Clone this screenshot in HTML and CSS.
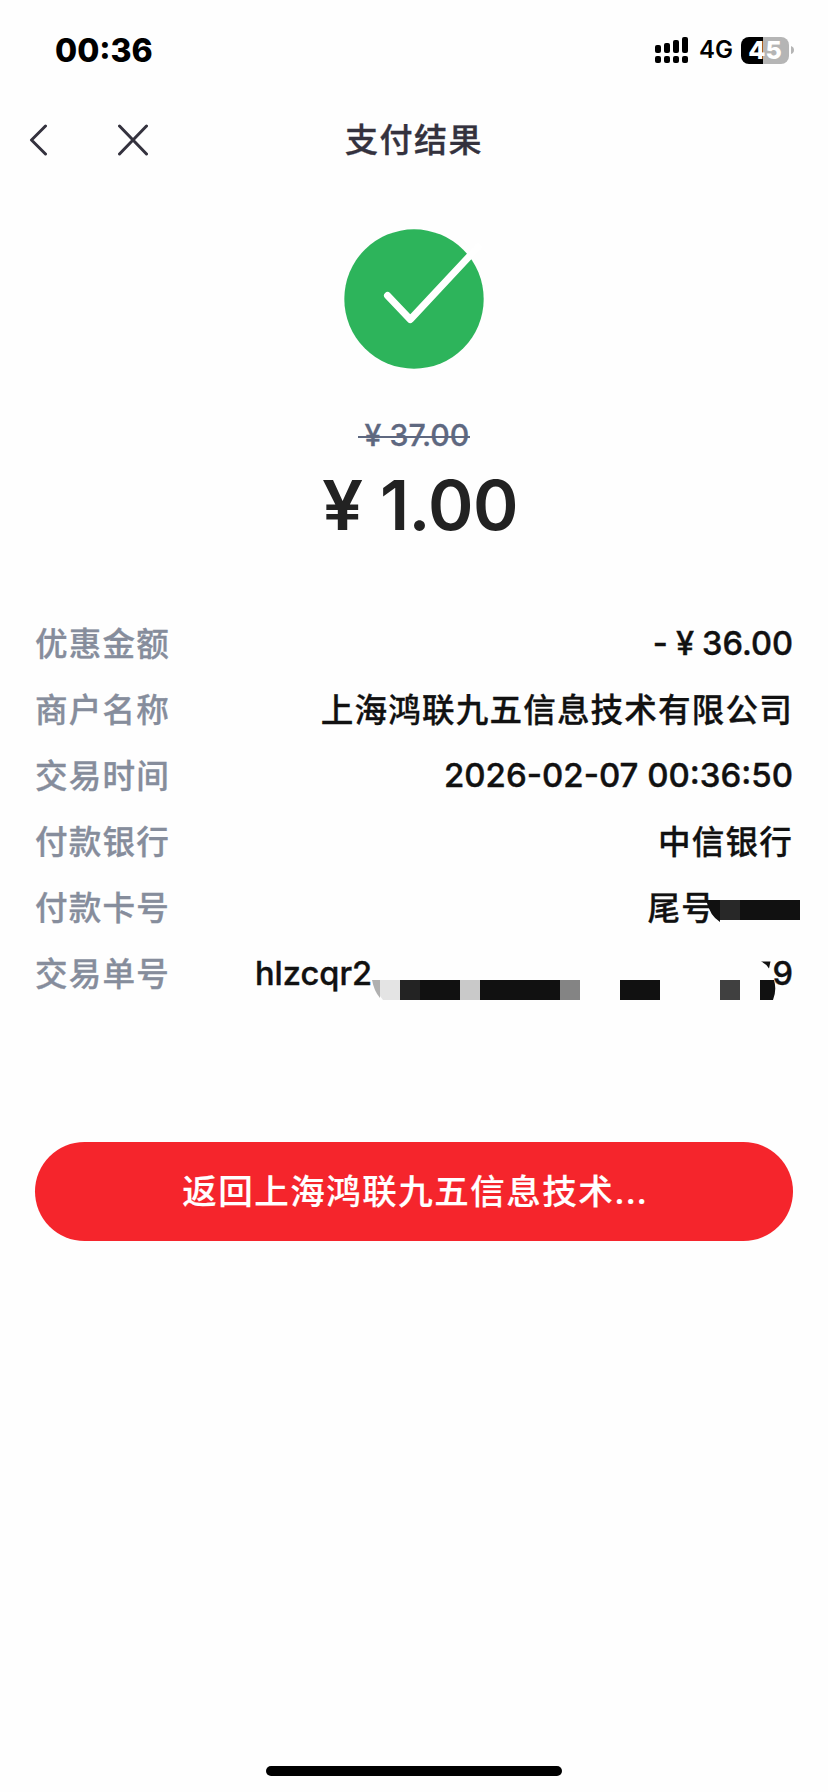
FILE: index.html
```html
<!DOCTYPE html>
<html lang="zh-CN">
<head>
<meta charset="utf-8">
<title>支付结果</title>
<link rel="stylesheet" href="styles.css">
</head>
<body>
<div class="screen">
  <header class="status">
    <span class="clock">00:36</span>
    <div class="status-right">
      <svg class="signal" width="34" height="28" viewBox="0 0 34 28">
        <rect x="0" y="9" width="6" height="8" rx="2"/><rect x="9" y="7" width="6" height="10" rx="2"/><rect x="18" y="4" width="6" height="13" rx="2"/><rect x="27" y="1" width="6" height="16" rx="2"/>
        <rect x="0" y="20" width="6" height="7" rx="2"/><rect x="9" y="20" width="6" height="7" rx="2"/><rect x="18" y="20" width="6" height="7" rx="2"/><rect x="27" y="20" width="6" height="7" rx="2"/>
      </svg>
      <span class="network">4G</span>
      <div class="battery"><span class="level">45</span></div>
      <svg class="cap" width="3" height="8" viewBox="0 0 3 8"><path d="M0 0Q3 1 3 4T0 8Z"/></svg>
    </div>
  </header>
  <nav class="nav">
    <svg class="nav-icon back" width="20" height="32" viewBox="0 0 20 32"><path d="M17.500 2L3.500 16L17.500 30"/></svg>
    <svg class="nav-icon close" width="32" height="32" viewBox="0 0 32 32"><path d="M3.500 2L30.500 30M30.500 2L3.500 30"/></svg>
    <h1 class="title">支付结果</h1>
  </nav>
  <main class="main">
    <svg class="success" width="140" height="140" viewBox="0 0 140 140"><circle cx="70" cy="70" r="69.7" fill="#2db45b"/><path d="M43.500 66.500L66.300 90.500L134 18" fill="none" stroke="#fff" stroke-width="7" stroke-linecap="round" stroke-linejoin="round"/></svg>
    <div class="original"><span>¥</span><span>37.00</span></div>
    <div class="amount"><span class="sign">¥</span><span class="figure">1.00</span></div>
    <section class="details">
      <div class="row"><span class="label">优惠金额</span><span class="value money"><span>-</span><span>¥</span><span>36.00</span></span></div>
      <div class="row"><span class="label">商户名称</span><span class="value cjk">上海鸿联九五信息技术有限公司</span></div>
      <div class="row"><span class="label">交易时间</span><span class="value num">2026-02-07 00:36:50</span></div>
      <div class="row"><span class="label">付款银行</span><span class="value cjk">中信银行</span></div>
      <div class="row"><span class="label">付款卡号</span><span class="value cjk tail">尾号</span>
        <svg class="mosaic" width="828" height="66" viewBox="0 874 828 66"><path fill="#111" d="M706 900H800V920H720V922Q710 916 706 900Z"/><rect x="720" y="900" width="20" height="20" fill="#282828"/></svg>
      </div>
      <div class="row"><span class="label">交易单号</span><span class="value serial"><span>hlzcqr2</span><span>9</span></span>
        <svg class="mosaic" width="828" height="66" viewBox="0 940 828 66">
          <path fill="#b0b0b0" d="M372 980H380V998Q374 991 372 980Z"/><path fill="#e4e4e4" d="M380 980H400V1000H383L380 996Z"/>
          <path fill="#232323" d="M400 980h20v20h-20z"/><path fill="#111" d="M420 980h40v20h-40zM480 980h80v20h-80zM620 980h40v20h-40z"/>
          <path fill="#c9c9c9" d="M460 980h20v20h-20z"/><path fill="#848484" d="M560 980h20v20h-20z"/><path fill="#404040" d="M720 980h20v20h-20z"/>
          <path fill="#111" d="M760 980H774Q777 990 773 1000H760ZM761 961.500H770.500L769 968.500Q766 963.500 761 961.500Z"/>
        </svg>
      </div>
    </section>
    <button class="return">返回上海鸿联九五信息技术<span class="dots">...</span></button>
  </main>
  <div class="home"></div>
</div>
</body>
</html>
```
FILE: styles.css
```css
* { box-sizing: border-box; }
body { margin: 0; background: #fefefe; font-family: Inter, "Noto Sans CJK SC", sans-serif; }
.screen { width: 828px; height: 1792px; display: flex; flex-direction: column; overflow: hidden; }
.status { height: 96px; padding: 5px 34px 0 55px; display: flex; justify-content: space-between; align-items: center; flex: none; }
.clock { font-size: 32px; line-height: 40px; font-weight: 800; }
.status-right { display: flex; align-items: center; margin-top: -1px; }
.signal { margin-right: 10px; }
.network { width: 33px; font-size: 24px; font-weight: 600; line-height: 28px; margin-right: 9px; white-space: nowrap; }
.battery { width: 48px; height: 27px; border-radius: 8px; background: linear-gradient(to right, #000 22px, #b5b5b5 22px); display: flex; justify-content: center; align-items: center; }
.level { color: #fff; font-size: 25px; line-height: 27px; font-weight: 800; }
.cap { fill: #b5b5b5; margin-left: 2px; }
.nav { height: 88px; padding: 0 28px; display: grid; grid-template-columns: 88px 32px 1fr 120px; align-items: center; flex: none; }
.nav-icon { fill: none; stroke: #34323e; stroke-width: 3; stroke-linecap: round; stroke-linejoin: round; }
.title { margin: 0; text-align: center; color: #34323e; font-size: 33px; line-height: 48px; font-weight: 500; letter-spacing: 1.5px; -webkit-text-stroke: 0.35px #34323e; }
.main { display: flex; flex-direction: column; align-items: center; }
.success { margin-top: 45px; flex: none; }
.original { display: flex; gap: 8px; margin-top: 46px; height: 40px; line-height: 40px; padding: 0 1px 0 7px; font-size: 30.3px; font-weight: 500; color: #5e6880; background: linear-gradient(#5e6880, #5e6880) 0 21px / 100% 2px no-repeat; -webkit-text-stroke: 0.3px #5e6880; }
.amount { display: flex; gap: 17px; margin: 8px 0 0 12px; height: 84px; line-height: 84px; font-size: 69px; font-weight: 600; color: #222; }
.sign { transform: scaleX(1.06); transform-origin: left; padding-right: 2px; }
.figure { letter-spacing: -0.6px; }
.details { width: 828px; margin-top: 64px; }
.row { height: 66px; padding: 0 35px; position: relative; display: flex; justify-content: space-between; align-items: center; font-size: 32.6px; line-height: 48px; font-weight: 500; }
.label { color: #868d9c; letter-spacing: 1.15px; -webkit-text-stroke: 0.3px #868d9c; }
.value { color: #111; white-space: nowrap; -webkit-text-stroke: 0.4px #111; margin-top: -2px; }
.cjk { letter-spacing: 1.15px; -webkit-text-stroke-width: 0.3px; margin-top: 0; }
.num { font-size: 33px; }
.money { display: flex; gap: 8px; }
.tail { margin-right: 78px; }
.serial { width: 538px; display: flex; justify-content: space-between; }
.mosaic { position: absolute; left: 0; top: -1px; }
.return { width: 758px; height: 99px; margin-top: 135px; padding: 0 0 0 2px; border: 0; border-radius: 50px; background: #f5252c; color: #fff; font: 500 34.5px/52px Inter, "Noto Sans CJK SC", sans-serif; letter-spacing: 1.5px; -webkit-text-stroke: 0.2px #fff; }
.dots { letter-spacing: 0.7px; }
.home { width: 296px; height: 10px; border-radius: 5px; background: #000; margin: auto auto 16px; flex: none; }
```
